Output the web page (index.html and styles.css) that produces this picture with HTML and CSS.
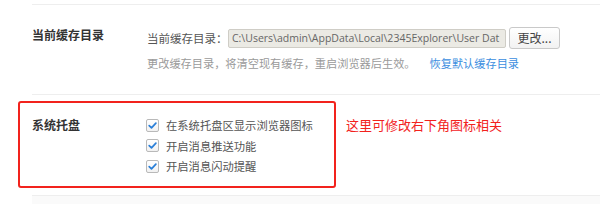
FILE: index.html
```html
<!DOCTYPE html>
<html lang="zh">
<head>
<meta charset="utf-8">
<link rel="stylesheet" href="styles.css">
</head>
<body>
<div class="page">
  <div class="section s-cache">
    <div class="title">当前缓存目录</div>
    <div class="body">
      <div class="row">
        <span class="label">当前缓存目录：</span>
        <div class="path">C:\Users\admin\AppData\Local\2345Explorer\User Dat</div>
        <button class="btn">更改...</button>
      </div>
      <div class="hint">更改缓存目录，将清空现有缓存，重启浏览器后生效。<a class="link">恢复默认缓存目录</a></div>
    </div>
  </div>
  <div class="section s-tray">
    <div class="title">系统托盘</div>
    <div class="body checks">
      <label class="check"><span class="box"><svg width="11" height="11" viewBox="0 0 11 11"><path d="M2.2 5.6 L4.5 7.9 L8.9 3.2" fill="none" stroke="#2a7fd8" stroke-width="1.7" stroke-linecap="round" stroke-linejoin="round"/></svg></span>在系统托盘区显示浏览器图标</label>
      <label class="check"><span class="box"><svg width="11" height="11" viewBox="0 0 11 11"><path d="M2.2 5.6 L4.5 7.9 L8.9 3.2" fill="none" stroke="#2a7fd8" stroke-width="1.7" stroke-linecap="round" stroke-linejoin="round"/></svg></span>开启消息推送功能</label>
      <label class="check"><span class="box"><svg width="11" height="11" viewBox="0 0 11 11"><path d="M2.2 5.6 L4.5 7.9 L8.9 3.2" fill="none" stroke="#2a7fd8" stroke-width="1.7" stroke-linecap="round" stroke-linejoin="round"/></svg></span>开启消息闪动提醒</label>
    </div>
    <div class="note">这里可修改右下角图标相关</div>
  </div>
  <div class="section s-end"></div>
  <div class="redbox"></div>
</div>
</body>
</html>
```
FILE: styles.css
```css
html, body {
  margin: 0;
  padding: 0;
  background: #fff;
}
body {
  font-family: "Noto Sans CJK SC", "Microsoft YaHei", sans-serif;
  color: #555;
  width: 600px;
  height: 204px;
  overflow: hidden;
}
.page {
  position: relative;
  padding-top: 4px;
}
.section {
  margin-left: 32px;
  border-top: 1px solid #eeeeee;
  display: flex;
  box-sizing: border-box;
}
.title {
  width: 115px;
  flex: none;
  font-size: 12px;
  font-weight: bold;
  color: #333;
  line-height: 16px;
}
.s-cache {
  height: 90px;
  padding-top: 22px;
}
.body {
  display: flex;
  flex-direction: column;
}
.row {
  display: flex;
  align-items: center;
  height: 22px;
}
.label {
  flex: none;
  width: 81px;
  font-size: 11.5px;
  color: #555;
  line-height: 16px;
  white-space: nowrap;
}
.path {
  flex: none;
  width: 278px;
  height: 19px;
  box-sizing: border-box;
  border: 1px solid #cfcdc6;
  background: #ebeae4;
  border-radius: 2px;
  font-family: "Open Sans", "Noto Sans", sans-serif;
  font-size: 10.5px;
  line-height: 17px;
  color: #666;
  padding-left: 3px;
  white-space: nowrap;
  overflow: hidden;
}
.btn {
  flex: none;
  margin-left: 3px;
  width: 51px;
  height: 22px;
  box-sizing: border-box;
  border: 1px solid #c9c9c9;
  border-radius: 3px;
  background: linear-gradient(#ffffff, #f2f2f2);
  font-family: "Noto Sans CJK SC", sans-serif;
  font-size: 12px;
  color: #444;
  padding: 0;
  line-height: 18px;
}
.hint {
  margin-top: 6px;
  font-size: 11.2px;
  color: #9a9a9a;
  line-height: 16px;
  white-space: nowrap;
}
.link {
  color: #3b8ee0;
  margin-left: 14px;
}
.s-tray {
  height: 101px;
  padding-top: 22px;
  position: relative;
}
.checks {
  gap: 4.5px;
}
.check {
  display: flex;
  align-items: center;
  font-size: 11.3px;
  color: #555;
  line-height: 16px;
  height: 16px;
}
.box {
  width: 13px;
  height: 13px;
  box-sizing: border-box;
  border: 1px solid #b9b9b9;
  border-radius: 2px;
  background: linear-gradient(#ffffff, #f1f1f1);
  margin-left: -1px;
  margin-right: 7px;
  display: flex;
  align-items: center;
  justify-content: center;
}
.box svg {
  display: block;
}
.note {
  position: absolute;
  left: 314px;
  top: 21px;
  font-size: 13px;
  color: #f2221d;
  line-height: 18px;
  white-space: nowrap;
}
.s-end {
  height: 10px;
  background: #fafafa;
}
.redbox {
  position: absolute;
  left: 18px;
  top: 101px;
  width: 318px;
  height: 87px;
  box-sizing: border-box;
  border: 2px solid #f2231d;
  border-radius: 3px;
  pointer-events: none;
}
```
